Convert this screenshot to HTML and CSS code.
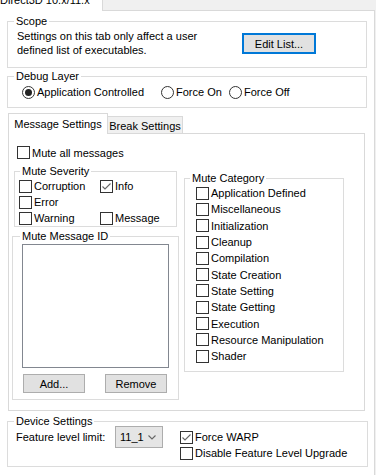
FILE: index.html
```html
<!DOCTYPE html>
<html lang="en">
<head>
  <meta charset="UTF-8">
  <meta name="viewport" content="width=device-width, initial-scale=1.0">
  <title>Direct3D 10.x/11.x</title>
  <link rel="stylesheet" href="styles.css">
</head>
<body>
  <div class="window">
    <div class="top-tabs">
      <div class="top-tab"><span>Direct3D 10.x/11.x</span></div>
    </div>

    <div class="main-page">
      <fieldset class="group scope">
        <legend>Scope</legend>
        <div class="scope-body">
          <p class="scope-text">Settings on this tab only affect a user defined list of executables.</p>
          <button class="btn btn-focus edit-btn">Edit List...</button>
        </div>
      </fieldset>

      <fieldset class="group debug">
        <legend>Debug Layer</legend>
        <div class="debug-body">
          <label class="radio radio-app"><span class="dot on"></span>Application Controlled</label>
          <label class="radio radio-on"><span class="dot"></span>Force On</label>
          <label class="radio"><span class="dot"></span>Force Off</label>
        </div>
      </fieldset>

      <div class="inner-tabs">
        <div class="tabstrip">
          <div class="tab tab-active">Message Settings</div>
          <div class="tab tab-break">Break Settings</div>
        </div>
        <div class="inner-page">
          <label class="check mute-all"><span class="box"></span>Mute all messages</label>

          <div class="cols">
            <div class="col-left">
              <fieldset class="group severity">
                <legend>Mute Severity</legend>
                <div class="sev-body">
                  <label class="check"><span class="box"></span>Corruption</label>
                  <label class="check"><span class="box"><svg width="11" height="11" viewBox="0 0 11 11"><polyline points="1.5,5.5 4,8 9.5,2.5" /></svg></span>Info</label>
                  <label class="check"><span class="box"></span>Error</label>
                  <span></span>
                  <label class="check"><span class="box"></span>Warning</label>
                  <label class="check"><span class="box"></span>Message</label>
                </div>
              </fieldset>

              <fieldset class="group msg-id">
                <legend>Mute Message ID</legend>
                <div class="msg-id-body">
                  <div class="listbox"></div>
                  <div class="btn-row">
                    <button class="btn small-btn">Add...</button>
                    <button class="btn small-btn">Remove</button>
                  </div>
                </div>
              </fieldset>
            </div>

            <fieldset class="group category">
              <legend>Mute Category</legend>
              <div class="cat-body">
                <label class="check cat-row"><span class="box"></span>Application Defined</label>
                <label class="check cat-row"><span class="box"></span>Miscellaneous</label>
                <label class="check cat-row"><span class="box"></span>Initialization</label>
                <label class="check cat-row"><span class="box"></span>Cleanup</label>
                <label class="check cat-row"><span class="box"></span>Compilation</label>
                <label class="check cat-row"><span class="box"></span>State Creation</label>
                <label class="check cat-row"><span class="box"></span>State Setting</label>
                <label class="check cat-row"><span class="box"></span>State Getting</label>
                <label class="check cat-row"><span class="box"></span>Execution</label>
                <label class="check cat-row"><span class="box"></span>Resource Manipulation</label>
                <label class="check cat-row"><span class="box"></span>Shader</label>
              </div>
            </fieldset>
          </div>
        </div>
      </div>

      <fieldset class="group device">
        <legend>Device Settings</legend>
        <div class="dev-body">
          <span class="feature-label">Feature level limit:</span>
          <div class="combo">
            <span>11_1</span>
            <svg width="8" height="5" viewBox="0 0 8 5"><polyline points="0.5,0.5 4,4 7.5,0.5" /></svg>
          </div>
          <div class="dev-checks">
            <label class="check"><span class="box"><svg width="11" height="11" viewBox="0 0 11 11"><polyline points="1.5,5.5 4,8 9.5,2.5" /></svg></span>Force WARP</label>
            <label class="check"><span class="box"></span>Disable Feature Level Upgrade</label>
          </div>
        </div>
      </fieldset>
    </div>
  </div>
</body>
</html>
```

FILE: styles.css
```css
* {
  box-sizing: border-box;
}

body {
  margin: 0;
  font-family: 'Liberation Sans', Arial, sans-serif;
  font-size: 11px;
  color: #000;
  background: #f0f0f0;
}

.window {
  width: 376px;
  height: 475px;
  overflow: hidden;
}

/* Onglet du haut, coupé par le bord */
.top-tabs {
  height: 10px;
  display: flex;
}

.top-tab {
  position: relative;
  z-index: 1;
  width: 103px;
  height: 11px;
  background: #fff;
  border-right: 1px solid #d9d9d9;
  overflow: hidden;
}

.top-tab span {
  display: block;
  margin-top: -6px;
  line-height: 13px;
  white-space: nowrap;
}

.main-page {
  margin-left: -1px;
  width: 376px;
  height: 470px;
  background: #fff;
  border: 1px solid #d9d9d9;
}

/* Group boxes */
.group {
  margin: 0;
  padding: 0;
  min-width: 0;
  border: 1px solid #dcdcdc;
}

.group legend {
  padding: 0 2px;
  margin-left: 6px;
  line-height: 13px;
}

.scope {
  margin: 4px 0 0 7px;
  width: 360px;
}

.scope-body {
  display: flex;
  align-items: flex-start;
  padding: 1px 0 10px 9px;
}

.scope-text {
  width: 192px;
  margin: 0 33px 0 0;
  line-height: 14px;
}

.debug {
  margin: 2px 0 0 7px;
  width: 360px;
}

.debug-body {
  display: flex;
  padding: 2px 0 8px 14px;
}

.radio {
  display: flex;
  align-items: center;
  height: 14px;
  white-space: nowrap;
}

.radio-app {
  width: 139px;
}

.radio-on {
  width: 68px;
}

.dot {
  flex: none;
  width: 13px;
  height: 13px;
  margin-right: 2px;
  border: 1px solid #333;
  border-radius: 50%;
  background: #fff;
}

.dot.on::after {
  content: "";
  display: block;
  width: 7px;
  height: 7px;
  margin: 2px;
  border-radius: 50%;
  background: #222;
}

/* Buttons */
.btn {
  font: inherit;
  color: #000;
  background: #e1e1e1;
  border: 1px solid #adadad;
  padding: 0;
}

.btn-focus {
  border: 2px solid #0078d7;
}

.edit-btn {
  width: 74px;
  height: 21px;
  margin-top: 4px;
}

/* Onglets internes */
.inner-tabs {
  margin: 5px 0 0 8px;
}

.tabstrip {
  display: flex;
  align-items: flex-end;
  height: 20px;
}

.tab {
  display: flex;
  align-items: center;
  justify-content: center;
  white-space: nowrap;
  background: #f0f0f0;
  border: 1px solid #d9d9d9;
  border-bottom: none;
}

.tab-active {
  position: relative;
  z-index: 1;
  width: 100px;
  height: 21px;
  margin-bottom: -1px;
  background: #fff;
}

.tab-break {
  width: 76px;
  height: 17px;
  margin-left: -1px;
  padding-top: 1px;
}

.inner-page {
  width: 357px;
  height: 278px;
  padding-top: 12px;
  background: #fff;
  border: 1px solid #d9d9d9;
}

/* Checkboxes */
.check {
  display: flex;
  align-items: center;
  white-space: nowrap;
}

.box {
  flex: none;
  width: 13px;
  height: 13px;
  margin-right: 2px;
  border: 1px solid #333;
  background: #fff;
}

.box svg {
  display: block;
}

.box polyline,
.combo polyline {
  fill: none;
  stroke: #666;
  stroke-width: 1.1;
}

.mute-all {
  height: 13px;
  margin-left: 8px;
}

.cols {
  display: flex;
  align-items: flex-start;
  margin-top: 6px;
}

.col-left {
  margin-left: 3px;
}

.severity {
  margin-left: 2px;
  width: 163px;
}

.severity legend,
.category legend {
  margin-left: 5px;
}

.sev-body {
  display: grid;
  grid-template-columns: 81px auto;
  grid-auto-rows: 16px;
  padding-left: 4px;
}

.msg-id {
  margin-top: 3px;
  width: 167px;
}

.msg-id legend {
  margin-left: 7px;
}

.msg-id-body {
  padding: 1px 0 6px 9px;
}

.listbox {
  width: 147px;
  height: 124px;
  background: #fff;
  border: 1px solid #828790;
}

.btn-row {
  display: flex;
  gap: 20px;
  margin: 6px 0 0 1px;
}

.small-btn {
  width: 62px;
  height: 19px;
}

.category {
  margin: 7px 0 0 5px;
  width: 160px;
}

.cat-body {
  padding: 0 0 7px 11px;
}

.cat-row {
  height: 16.3px;
}

/* Device settings */
.device {
  margin: 4px 0 0 7px;
  width: 361px;
}

.dev-body {
  display: flex;
  align-items: flex-start;
  margin-top: -2px;
  padding: 0 0 5px 8px;
}

.feature-label {
  width: 99px;
  line-height: 22px;
}

.combo {
  display: flex;
  align-items: center;
  justify-content: space-between;
  width: 48px;
  height: 22px;
  padding: 0 6px 0 4px;
  background: #e5e5e5;
  border: 1px solid #adadad;
}

.dev-checks {
  margin: 3px 0 0 17px;
}

.dev-checks .check {
  height: 16px;
}
```
